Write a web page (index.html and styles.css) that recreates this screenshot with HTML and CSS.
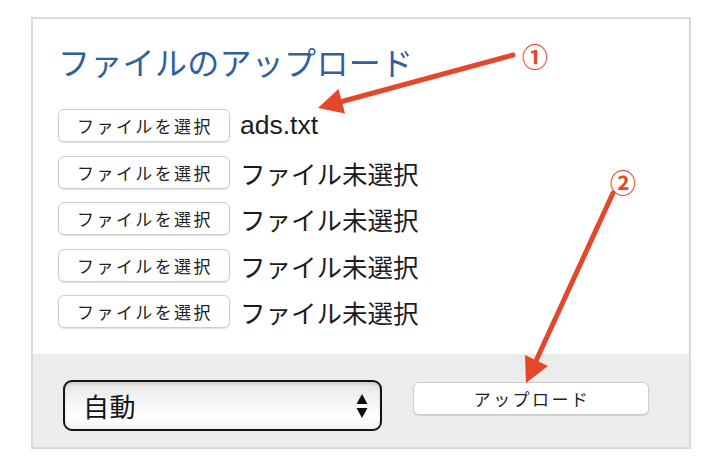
FILE: index.html
```html
<!DOCTYPE html>
<html lang="ja">
<head>
<meta charset="utf-8">
<link rel="stylesheet" href="styles.css">
</head>
<body>
<div class="page">
  <div class="panel">
    <div class="panel-body">
      <h1 class="title">ファイルのアップロード</h1>
      <div class="rows">
        <div class="row"><span class="btn">ファイルを選択</span><span class="fname latin">ads.txt</span></div>
        <div class="row"><span class="btn">ファイルを選択</span><span class="fname">ファイル未選択</span></div>
        <div class="row"><span class="btn">ファイルを選択</span><span class="fname">ファイル未選択</span></div>
        <div class="row"><span class="btn">ファイルを選択</span><span class="fname">ファイル未選択</span></div>
        <div class="row"><span class="btn">ファイルを選択</span><span class="fname">ファイル未選択</span></div>
      </div>
    </div>
    <div class="panel-foot">
      <div class="select">
        <span class="select-label">自動</span>
        <svg class="select-arrows" width="12" height="26" viewBox="0 0 12 26"><path d="M6 1 L11.5 11 L0.5 11 Z M0.5 15 L11.5 15 L6 25 Z" fill="#111"/></svg>
      </div>
      <span class="btn upload">アップロード</span>
    </div>
  </div>
  <svg class="notes" width="718" height="474" viewBox="0 0 718 474">
    <g stroke="#e5472b" stroke-width="5" stroke-linecap="round">
      <line x1="513" y1="55" x2="340" y2="102"/>
      <line x1="613" y1="193" x2="535" y2="363"/>
    </g>
    <g fill="#e5472b">
      <polygon points="318,108 345,113.5 338.5,89"/>
      <polygon points="526,383 548,366 525,355"/>
      <text x="535" y="55" class="num">①</text>
      <text x="623" y="181" class="num">②</text>
    </g>
  </svg>
</div>
</body>
</html>
```
FILE: styles.css
```css
html, body {
  margin: 0;
  padding: 0;
  background: #ffffff;
}
body {
  width: 718px;
  height: 474px;
  overflow: hidden;
  font-family: "Noto Sans CJK JP", "Liberation Sans", sans-serif;
}
.page {
  position: relative;
  width: 718px;
  height: 474px;
  padding: 17px 0 0 31px;
  box-sizing: border-box;
}
.panel {
  width: 660px;
  height: 432px;
  box-sizing: border-box;
  border: 2px solid #dadada;
  display: flex;
  flex-direction: column;
}
.panel-body {
  flex: 1;
  padding: 22px 0 0 25px;
}
.title {
  margin: 0 0 28px 0;
  font-family: "Noto Sans CJK JP", sans-serif;
  font-weight: normal;
  font-size: 32px;
  line-height: 40px;
  color: #30609f;
  letter-spacing: 0.3px;
}
.rows {
  display: flex;
  flex-direction: column;
  gap: 13.5px;
}
.row {
  display: flex;
  align-items: center;
  gap: 10px;
  height: 33px;
}
.btn {
  display: flex;
  align-items: center;
  justify-content: center;
  box-sizing: border-box;
  height: 33px;
  background: #ffffff;
  border: 1px solid #cdcdcd;
  border-radius: 6px;
  box-shadow: 0 1px 1px rgba(0, 0, 0, 0.12);
  font-family: "Noto Sans CJK JP", sans-serif;
  font-size: 17px;
  letter-spacing: 2.4px;
  color: #222222;
}
.row .btn {
  width: 172px;
  padding-left: 2px;
}
.fname {
  font-family: "Noto Sans CJK JP", sans-serif;
  font-size: 25.5px;
  line-height: 33px;
  color: #1c1c1c;
}
.fname.latin {
  font-family: "Liberation Sans", "Noto Sans CJK JP", sans-serif;
  font-size: 26.5px;
}
.panel-foot {
  height: 93px;
  flex: none;
  background: #ececec;
  box-sizing: border-box;
  padding: 26px 0 0 30px;
  display: flex;
  align-items: flex-start;
  gap: 31px;
}
.select {
  width: 319px;
  height: 51px;
  box-sizing: border-box;
  border: 2px solid #141414;
  border-radius: 9px;
  background: linear-gradient(#e4e4e4 0%, #f7f7f7 45%, #ffffff 75%, #f1f1f1 100%);
  box-shadow: inset 0 2px 3px rgba(0, 0, 0, 0.12);
  display: flex;
  align-items: center;
  justify-content: space-between;
  padding: 0 12px 0 18px;
}
.select-label {
  font-family: "Noto Sans CJK JP", sans-serif;
  font-size: 26px;
  color: #111;
  letter-spacing: 0.5px;
}
.select-arrows {
  display: block;
}
.upload {
  width: 236px;
  margin-top: 2px;
  padding-left: 2px;
}
.notes {
  position: absolute;
  left: 0;
  top: 0;
  pointer-events: none;
}
.num {
  font-family: "Noto Sans CJK JP", sans-serif;
  font-size: 26px;
  font-weight: 700;
  text-anchor: middle;
  dominant-baseline: central;
}
```
